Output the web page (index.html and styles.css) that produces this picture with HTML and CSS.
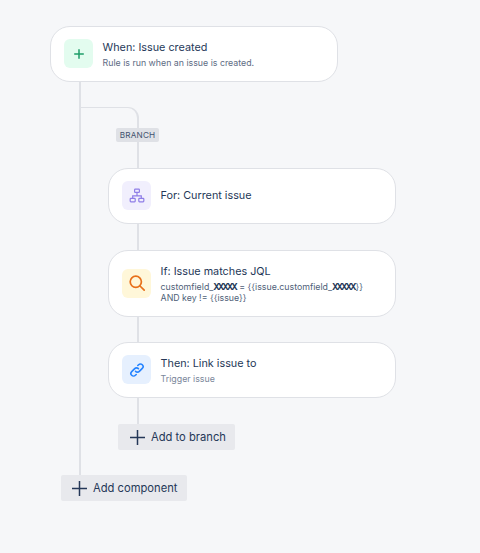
FILE: index.html
```html
<!DOCTYPE html>
<html lang="en">
<head>
<meta charset="utf-8">
<title>Automation rule</title>
<link rel="stylesheet" href="styles.css">
</head>
<body>
<main class="flow">
  <section class="card card-tall">
    <div class="icon icon-green">
      <svg width="14" height="14" viewBox="0 0 14 14"><path d="M7 2.2v9.6M2.2 7h9.6" fill="none" stroke="#1f9d6a" stroke-width="1.5"/></svg>
    </div>
    <div class="body body-two">
      <div class="title">When: Issue created</div>
      <div class="sub">Rule is run when an issue is created.</div>
    </div>
  </section>
  <div class="trunk">
    <div class="branch">
      <div class="branch-head"><span class="badge">BRANCH</span></div>
      <section class="card card-tall">
        <div class="icon icon-purple">
          <svg width="16" height="16" viewBox="0 0 16 16" fill="none" stroke="#8f7ee7" stroke-width="1.2"><rect x="5.6" y="1.2" width="4.8" height="3.2" rx=".7"/><rect x="1.2" y="10.4" width="5" height="3.4" rx=".7"/><rect x="9.8" y="10.4" width="5" height="3.4" rx=".7"/><path d="M8 4.4v3.4M3.7 10.4V7.8h8.6v2.6"/></svg>
        </div>
        <div class="body"><div class="title">For: Current issue</div></div>
      </section>
      <div class="link link-26"></div>
      <section class="card card-if">
        <div class="icon icon-yellow">
          <svg width="18" height="18" viewBox="0 0 18 18" fill="none" stroke="#e8701a" stroke-width="1.7"><circle cx="7.8" cy="7.8" r="5.6"/><path d="M12 12l4.2 4.2" stroke-linecap="round"/></svg>
        </div>
        <div class="body body-two">
          <div class="title">If: Issue matches JQL</div>
          <div class="sub sub-dark">customfield_<span class="mask">XXXXX</span> = {{issue.customfield_<span class="mask">XXXXX</span>}}<br>AND key != {{issue}}</div>
        </div>
      </section>
      <div class="link link-25"></div>
      <section class="card card-tall">
        <div class="icon icon-blue">
          <svg width="16" height="16" viewBox="0 0 16 16" fill="none" stroke="#2684ff" stroke-width="1.6" stroke-linecap="round"><path d="M6.6 9.4a2.6 2.6 0 0 0 3.7 0l3-3a2.6 2.6 0 0 0-3.7-3.7L8.8 3.5"/><path d="M9.4 6.6a2.6 2.6 0 0 0-3.7 0l-3 3a2.6 2.6 0 0 0 3.7 3.7l.8-.8"/></svg>
        </div>
        <div class="body body-two">
          <div class="title">Then: Link issue to</div>
          <div class="sub sub-light">Trigger issue</div>
        </div>
      </section>
      <div class="link link-26"></div>
      <button class="add add-branch" type="button">
        <svg width="15" height="15" viewBox="0 0 15 15"><path d="M7.5 0v15M0 7.5h15" fill="none" stroke="#253858" stroke-width="1.5"/></svg>
        Add to branch
      </button>
    </div>
  </div>
  <button class="add add-root" type="button">
    <svg width="15" height="15" viewBox="0 0 15 15"><path d="M7.5 0v15M0 7.5h15" fill="none" stroke="#253858" stroke-width="1.5"/></svg>
    Add component
  </button>
</main>
</body>
</html>
```
FILE: styles.css
```css
* { box-sizing: border-box; }
html, body { margin: 0; height: 100%; }
body {
  background: #f6f7f9;
  font-family: Inter, "Liberation Sans", sans-serif;
  color: #253858;
  overflow: hidden;
}
.flow {
  display: flex;
  flex-direction: column;
  align-items: flex-start;
  padding: 26px 0 0 50px;
}
.card {
  width: 288px;
  display: flex;
  align-items: center;
  gap: 9.6px;
  padding: 0 13px;
  background: #fff;
  border: 1px solid #dfe1e6;
  border-radius: 20px;
}
.card-tall { height: 56px; }
.card-if { height: 67px; }
.icon {
  flex: none;
  width: 29px;
  height: 29px;
  margin-top: -1px;
  border-radius: 6px;
  display: flex;
  align-items: center;
  justify-content: center;
}
.icon-green { background: #e3fcef; }
.icon-purple { background: #f1effd; }
.icon-yellow { background: #fff7d9; }
.icon-blue { background: #e6f0fe; }
.body { margin-top: -1px; }
.body-two { margin-top: 1px; }
.title {
  font-size: 10.8px;
  line-height: 14px;
  color: #253858;
}
.sub {
  margin-top: 2px;
  font-size: 8.8px;
  line-height: 11px;
  color: #5e6c84;
}
.sub-dark { color: #505f79; }
.sub-light { color: #7a869a; }
.mask {
  font-weight: 700;
  letter-spacing: -2px;
  color: #253858;
  margin-right: 1px;
}
.trunk {
  margin-left: 29px;
  width: 340px;
  height: 393px;
  padding-top: 25px;
  border-left: 2px solid #dfe1e6;
}
.branch {
  display: flex;
  flex-direction: column;
  align-items: flex-start;
  margin-left: 27px;
}
.branch-head {
  position: relative;
  margin-left: -27px;
  width: 58px;
  height: 61px;
  border-top: 1px solid #dfe1e6;
  border-right: 2px solid #dfe1e6;
  border-top-right-radius: 11px;
}
.badge {
  position: absolute;
  top: 20px;
  right: -22px;
  width: 43px;
  height: 14px;
  border-radius: 2px;
  background: #dfe1e6;
  color: #42526e;
  font-size: 8.2px;
  line-height: 14px;
  text-align: center;
  letter-spacing: .2px;
}
.link {
  width: 2px;
  margin-left: 29px;
  background: #dfe1e6;
}
.link-26 { height: 26px; }
.link-25 { height: 25px; }
.add {
  display: flex;
  align-items: center;
  height: 26px;
  padding: 0;
  border: 0;
  border-radius: 2px;
  background: #e8e9ed;
  color: #253858;
  font: 400 11.2px/14px Inter, "Liberation Sans", sans-serif;
  gap: 6px;
}
.add-branch { width: 117px; margin-left: 10px; padding-left: 12px; }
.add-root { width: 126px; margin-left: 11px; padding-left: 11px; }
```
